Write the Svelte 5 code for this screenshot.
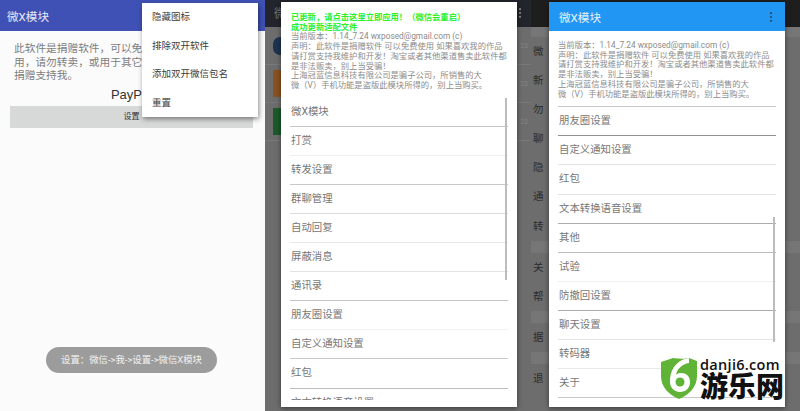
<script lang="ts">
	const menu = ['隐藏图标', '排除双开软件', '添加双开微信包名', '重置'];

	const notice = [
		'当前版本：1.14_7.24 wxposed@gmail.com (c)',
		'声明：此软件是捐赠软件 可以免费使用 如果喜欢我的作品',
		'请打赏支持我维护和开发！淘宝或者其他渠道售卖此软件都',
		'是非法贩卖，别上当受骗！',
		'上海冠蓝信息科技有限公司是骗子公司，所销售的大',
		'微（V）手机功能是盗版此模块所得的，别上当购买。'
	];

	// line strength differs row to row in the capture, so each row carries its own
	const prefsA = [
		['微X模块', '#c4c4c4'],
		['打赏', '#efefef'],
		['转发设置', '#c8c8c8'],
		['群聊管理', '#dcdcdc'],
		['自动回复', '#e8e8e8'],
		['屏蔽消息', '#e4e4e4'],
		['通讯录', '#c4c4c4'],
		['朋友圈设置', '#f2f2f2'],
		['自定义通知设置', '#c8c8c8'],
		['红包', '#bdbdbd'],
		['文本转换语音设置', 'transparent']
	];

	const prefsB = [
		['朋友圈设置', '#8f8f8f'],
		['自定义通知设置', '#e2e2e2'],
		['红包', '#e2e2e2'],
		['文本转换语音设置', '#acacac'],
		['其他', '#bcbcbc'],
		['试验', '#efefef'],
		['防撤回设置', '#acacac'],
		['聊天设置', '#e4e4e4'],
		['转码器', '#e8e8e8'],
		['关于', '#c8c8c8']
	];

	// the settings list behind the third dialog, cut into its groups
	const behind = [
		['微', '新', '勿', '聊', '隐', '通', '转'],
		['关', '帮'],
		['据'],
		['退']
	];
</script>

<div class="shot">
	<section class="panel first">
		<header class="toolbar"><span class="title">微X模块</span></header>
		<div class="donate">
			<p>此软件是捐赠软件，可以免<br />用，请勿转卖，或用于其它<br />捐赠支持我。</p>
			<div class="paypal">PayPal</div>
			<div class="setup">设置</div>
		</div>
		<div class="toast">设置：微信->我->设置->微信X模块</div>
		<ul class="menu">
			{#each menu as item}
				<li>{item}</li>
			{/each}
		</ul>
	</section>

	<section class="panel dim">
		<header class="darkbar slate">
			<span class="bar-title">微</span>
			<svg class="dots" width="4" height="10" viewBox="0 0 4 10"><circle cx="2" cy="1.2" r="1.1" /><circle cx="2" cy="5" r="1.1" /><circle cx="2" cy="8.8" r="1.1" /></svg>
		</header>
		<div class="apps">
			<div class="app"><i class="tile round"></i><b>23</b></div>
			<div class="app"><i class="tile orange"></i><b>23</b></div>
			<div class="app"><i class="tile leaf"></i><b>23</b></div>
		</div>
		<div class="dialog">
			<div class="notes">
				<div class="green">已更新，请点击这里立即应用！（微信会重启）</div>
				<div class="green">成功更新适配文件</div>
				{#each notice as line}
					<div>{line}</div>
				{/each}
			</div>
			<ul class="prefs">
				{#each prefsA as [label, line]}
					<li style="border-color: {line}">{label}</li>
				{/each}
			</ul>
			<i class="scroll scroll-a"></i>
		</div>
	</section>

	<section class="panel dim third">
		<header class="darkbar">
			<svg class="back" width="12" height="12" viewBox="0 0 12 12"><path d="M11 6H2M6 2 2 6l4 4" /></svg>
		</header>
		<div class="behind">
			{#each behind as group}
				<ul class="group">
					{#each group as ch}
						<li>{ch}</li>
					{/each}
				</ul>
			{/each}
		</div>
		<div class="dialog">
			<header class="blue">
				<span class="blue-title">微X模块</span>
				<svg class="dots" width="4" height="10" viewBox="0 0 4 10"><circle cx="2" cy="1.2" r="1.1" /><circle cx="2" cy="5" r="1.1" /><circle cx="2" cy="8.8" r="1.1" /></svg>
			</header>
			<div class="notes tight">
				{#each notice as line}
					<div>{line}</div>
				{/each}
			</div>
			<ul class="prefs second">
				{#each prefsB as [label, line]}
					<li style="border-color: {line}">{label}</li>
				{/each}
			</ul>
			<i class="scroll scroll-b"></i>
		</div>
	</section>

	<div class="mark">
		<svg width="38" height="43" viewBox="0 0 38 43">
			<path d="M1 5 13 1c6 1 12 1 16 0l8 3v15c0 11-8 19-18 23C9 38 1 30 1 19Z" fill="#5fb336" />
			<path d="M29 1c-10 1-18 9-19 21-1 8 4 13 10 13s10-4 10-10-4-9-9-9c-2 0-4 .6-5 2 1-6 6-11 13-12Z" fill="#fff" />
			<circle cx="20" cy="25" r="4.5" fill="#5fb336" />
		</svg>
		<div class="brand">
			<span class="domain">danji6.com</span>
			<span class="cn">游乐网</span>
		</div>
	</div>
</div>

<style>
	:global(body) {
		margin: 0;
		background: #fff;
	}
	.shot {
		position: relative;
		display: flex;
		width: 800px;
		height: 411px;
		overflow: hidden;
		font-family: Roboto, 'Noto Sans CJK SC', sans-serif;
		color: #757575;
	}
	ul {
		list-style: none;
		margin: 0;
		padding: 0;
	}
	.panel {
		position: relative;
		flex: none;
		width: 266px;
		height: 411px;
		box-sizing: border-box;
	}
	.first {
		background: #fbfbfb;
		width: 265px;
	}
	.third {
		width: 269px;
	}
	.toolbar {
		display: flex;
		align-items: center;
		height: 31px;
		padding-left: 7px;
		background: #3f51b5;
	}
	.title {
		font-size: 11.6px;
		color: #e6e8f5;
	}
	.donate {
		padding: 11px 12px 0 10px;
	}
	.donate p {
		margin: 0 0 0 4px;
		font-size: 10.7px;
		line-height: 13.5px;
		color: #7e7e7e;
	}
	.paypal {
		margin-top: 2px;
		text-align: center;
		font-family: 'Liberation Sans', sans-serif;
		font-size: 13px;
		line-height: 19px;
		color: #333;
	}
	.setup {
		height: 22px;
		margin-top: 2px;
		background: #d7d8d8;
		text-align: center;
		font-size: 8px;
		line-height: 22px;
		color: #333;
	}
	.toast {
		position: absolute;
		left: 46px;
		top: 347px;
		width: 171px;
		height: 26px;
		border-radius: 13px;
		background: #9c9c9c;
		color: #f2f2f2;
		font-size: 9.4px;
		line-height: 26px;
		text-align: center;
	}
	.menu {
		position: absolute;
		left: 142px;
		top: 3px;
		width: 116px;
		height: 114px;
		background: #fff;
		box-shadow: 1px 2px 5px rgba(0, 0, 0, 0.45);
		color: #3c3c3c;
		font-size: 9.5px;
	}
	.menu li {
		height: 28.7px;
		line-height: 28.7px;
		padding-left: 10px;
	}
	.dim {
		background: #6d6d6d;
	}
	.darkbar {
		display: flex;
		align-items: center;
		justify-content: space-between;
		height: 27px;
		padding: 0 9px 2px 9px;
		box-sizing: border-box;
		background: #1e1e1e;
	}
	.slate {
		background: #22252c;
	}
	.bar-title {
		font-size: 12px;
		color: #6f7480;
	}
	.dots {
		fill: #8a8a8a;
	}
	.back {
		margin-left: 8px;
		fill: none;
		stroke: #8d8d8d;
		stroke-width: 1.4;
	}
	.app {
		display: flex;
		justify-content: space-between;
		align-items: center;
		height: 38px;
		padding: 0 3px 0 8px;
		border-bottom: 1px solid #787878;
		box-sizing: border-box;
	}
	.app b {
		font-weight: 400;
		font-size: 7px;
		color: #848484;
	}
	.tile {
		display: block;
		width: 14px;
		height: 27px;
	}
	.round {
		height: 18px;
		border-radius: 9px;
		background: #1d3350;
	}
	.orange {
		background: #8a5320;
	}
	.leaf {
		background: #1c5a2a;
	}
	.behind {
		padding-top: 9.5px;
	}
	.group {
		margin-bottom: 12px;
		background: #6d6d6d;
	}
	.behind {
		background: #767676;
	}
	.group li {
		height: 29.2px;
		line-height: 29.2px;
		padding-left: 2px;
		font-size: 10.5px;
		color: #2c2c2c;
	}
	.dialog {
		position: absolute;
		left: 16px;
		top: 2px;
		width: 236px;
		height: 405px;
		background: #fff;
		overflow: hidden;
		box-shadow: 0 1px 5px rgba(0, 0, 0, 0.5);
	}
	.third .dialog {
		left: 18px;
	}
	.notes {
		padding: 11px 9px 0 10px;
		font-size: 8.3px;
		line-height: 9.7px;
		white-space: nowrap;
		color: #8c8c8c;
	}
	.notes .green {
		color: #2bf02b;
		font-weight: 700;
	}
	.notes.tight {
		padding: 10px 9px 0;
	}
	.blue {
		display: flex;
		align-items: center;
		justify-content: space-between;
		height: 29px;
		padding: 0 12px 0 10px;
		background: #2196f3;
	}
	.blue-title {
		font-size: 11.6px;
		color: #e4f2fd;
	}
	.blue .dots {
		fill: #234f70;
	}
	.prefs {
		height: 302px;
		overflow: hidden;
		margin: 7px 9px 0;
		font-size: 10.4px;
		color: #777;
	}
	.prefs.second {
		height: 292px;
		margin-top: 7px;
		border-top: 1px solid #c8c8c8;
	}
	.prefs li {
		height: 29.1px;
		line-height: 28px;
		padding-left: 1px;
		box-sizing: border-box;
		border-bottom: 1px solid;
	}
	.scroll {
		position: absolute;
		width: 2px;
		background: #bcbcbc;
	}
	.scroll-a {
		left: 224px;
		top: 96px;
		height: 182px;
	}
	.scroll-b {
		left: 224px;
		top: 215px;
		height: 125px;
	}
	.mark {
		position: absolute;
		left: 660px;
		top: 357px;
		display: flex;
		gap: 2px;
	}
	.brand {
		display: flex;
		flex-direction: column;
		color: #111;
	}
	.domain {
		font-family: 'Open Sans', sans-serif;
		font-size: 14.5px;
		line-height: 15px;
		letter-spacing: 0.3px;
		font-weight: 600;
		text-shadow: 0 0 2px #fff;
	}
	.cn {
		font-family: 'Noto Sans CJK SC', sans-serif;
		font-weight: 900;
		font-size: 28px;
		line-height: 27px;
		text-shadow: 0 0 2px #fff;
	}
</style>
